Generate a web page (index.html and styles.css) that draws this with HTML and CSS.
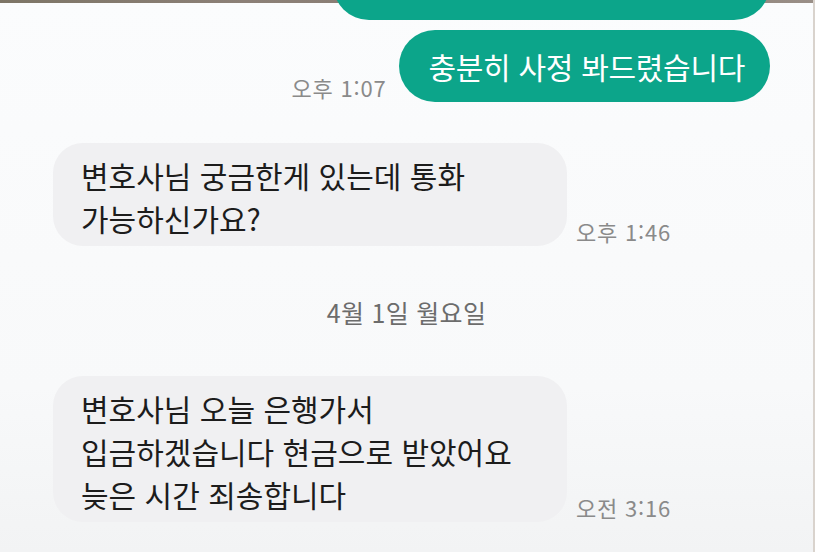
FILE: index.html
```html
<!DOCTYPE html>
<html lang="ko">
<head>
  <meta charset="UTF-8" />
  <meta name="viewport" content="width=device-width, initial-scale=1.0"/>
  <title>채팅</title>
  <link rel="stylesheet" href="styles.css">
</head>
<body>
  <div class="topbar"></div>

  <div class="chat">
    <!-- previous message, scrolled off the top -->
    <div class="row out">
      <div class="bubble green cut" aria-hidden="true"></div>
    </div>

    <div class="row out first">
      <span class="time">오후 1:07</span>
      <div class="bubble green">충분히 사정 봐드렸습니다</div>
    </div>

    <div class="row in">
      <div class="bubble grey">변호사님 궁금한게 있는데 통화<br>가능하신가요?</div>
      <span class="time">오후 1:46</span>
    </div>

    <div class="date">4월 1일 월요일</div>

    <div class="row in">
      <div class="bubble grey">변호사님 오늘 은행가서<br>입금하겠습니다 현금으로 받았어요<br>늦은 시간 죄송합니다</div>
      <span class="time">오전 3:16</span>
    </div>
  </div>
</body>
</html>
```

FILE: styles.css
```css
:root {
  --green: #0ca58a;
  --grey-bubble: #f0f0f2;
  --text: #1c1c1c;
  --time: #8a8a8a;
}

html, body {
  margin: 0;
  padding: 0;
}

body {
  width: 813px;
  height: 552px;
  overflow: hidden;
  border-right: 2px solid #d9d3cd;
  background: linear-gradient(180deg, #fbfcfd 0%, #f8f9fa 70%, #f2f3f4 100%);
  font-family: "Noto Sans CJK KR", "Noto Sans", sans-serif;
  color: var(--text);
}

.topbar {
  height: 3px;
  background: linear-gradient(90deg, #7d7566, #8c8077 30%, #857a70 70%, #9a8f87);
}

.chat {
  padding: 0 43px 0 53px;
}

.row {
  display: flex;
  align-items: flex-end;
  gap: 12px;
}

.row.out {
  justify-content: flex-end;
}

.row.first {
  margin-top: 10px;
}

.row.in {
  margin-top: 41px;
  gap: 9px;
}

.bubble {
  font-size: 30px;
}

.bubble.green {
  background: var(--green);
  color: #fff;
  height: 72px;
  line-height: 72px;
  padding: 0 25px 0 30px;
  border-radius: 36px;
  letter-spacing: -0.3px;
}

.bubble.cut {
  width: 437px;
  margin-top: -55px;
  padding: 0;
}

.bubble.grey {
  background: var(--grey-bubble);
  width: 514px;
  box-sizing: border-box;
  padding: 11px 28px 6px;
  line-height: 43px;
  border-radius: 30px;
}

.time {
  font-size: 22px;
  line-height: 26px;
  color: var(--time);
  margin-bottom: 2px;
  letter-spacing: 0.8px;
}

.date {
  margin: 46px -43px 0 -53px;
  height: 40px;
  line-height: 40px;
  text-align: center;
  font-size: 25px;
  letter-spacing: 0.3px;
  color: #6c6c6c;
}

.date + .row.in {
  margin-top: 44px;
}
```
